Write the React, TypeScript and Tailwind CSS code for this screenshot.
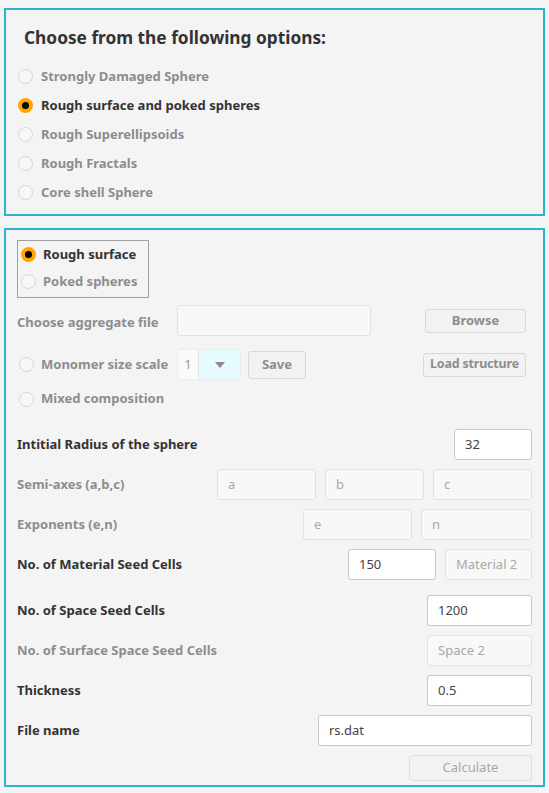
import React from 'react';

const font = { fontFamily: '"Noto Sans", "Open Sans", sans-serif' };

const Radio = ({ checked = false, dim = false }: { checked?: boolean; dim?: boolean }) => (
  <span
    className={`flex h-[15px] w-[15px] shrink-0 items-center justify-center rounded-full ${
      checked ? 'bg-[#ffa500]' : dim ? 'border border-[#d6d6d6] bg-[#f7f7f7]' : 'border border-[#ccc] bg-white'
    }`}
  >
    {checked && <span className="h-[7px] w-[7px] rounded-full bg-black" />}
  </span>
);

const Field = ({
  w,
  value,
  placeholder,
  disabled = false,
}: {
  w: string;
  value?: string;
  placeholder?: string;
  disabled?: boolean;
}) => (
  <div
    className={`flex h-[31px] items-center rounded-[3px] border px-[10px] text-[13px] ${w} ${
      disabled ? 'border-[#e2e2e2] bg-[#f8f8f8] text-[#a8a8a8]' : 'border-[#c8c8c8] bg-white text-[#444]'
    }`}
  >
    {value ?? placeholder}
  </div>
);

const Label = ({ children, dim = false }: { children: React.ReactNode; dim?: boolean }) => (
  <span className={`text-[13px] font-bold ${dim ? 'text-[#8d8d8d]' : 'text-[#333]'}`}>{children}</span>
);

const Row = ({ label, dim = false, children, className = '' }: { label: string; dim?: boolean; children: React.ReactNode; className?: string }) => (
  <div className={`flex h-[31px] items-center justify-between ${className}`}>
    <Label dim={dim}>{label}</Label>
    <div className="flex gap-[9px]">{children}</div>
  </div>
);

const options = [
  'Strongly Damaged Sphere',
  'Rough surface and poked spheres',
  'Rough Superellipsoids',
  'Rough Fractals',
  'Core shell Sphere',
];

export default function App() {
  return (
    <div className="min-h-screen w-[549px] bg-[#f4f4f4] pt-[8px] pl-[4px] pb-[8px]" style={font}>
      {/* options panel */}
      <div className="w-[541px] border-2 border-[#2bb5cd] pt-[16px] pb-[7px] pl-[12px]">
        <h2 className="ml-[6px] h-[24px] text-[17.3px] font-bold leading-[24px] text-[#333]">
          Choose from the following options:
        </h2>
        <div className="mt-[12px] flex flex-col">
          {options.map((o, i) => (
            <div key={o} className="flex h-[29px] items-center gap-[8px]">
              <Radio checked={i === 1} dim />
              <Label dim={i !== 1}>{o}</Label>
            </div>
          ))}
        </div>
      </div>

      {/* form panel */}
      <div className="mt-[12px] w-[541px] border-2 border-[#2bb5cd] px-[11px] pt-[10px] pb-[4px]">
        <div className="flex h-[58px] w-[132px] flex-col border border-[#a0a0a0] pb-[2px] pl-[3px]">
          <div className="flex h-[27px] items-center gap-[7px]">
            <Radio checked />
            <Label>Rough surface</Label>
          </div>
          <div className="flex h-[27px] items-center gap-[7px]">
            <Radio dim />
            <Label dim>Poked spheres</Label>
          </div>
        </div>

        <div className="mt-[7px] flex h-[31px] items-center">
          <span className="w-[160px]"><Label dim>Choose aggregate file</Label></span>
          <div className="h-[31px] w-[194px] rounded-[3px] border border-[#e2e2e2] bg-[#f8f8f8]" />
          <button className="ml-[54px] flex h-[24px] w-[101px] items-center justify-center rounded-[3px] border border-[#d8d8d8] bg-[#f2f2f2] text-[13px] font-bold text-[#8d8d8d]">
            Browse
          </button>
        </div>

        <div className="mt-[13px] flex h-[31px] items-center">
          <span className="ml-[2px] flex w-[158px] items-center gap-[7px]">
            <Radio dim />
            <Label dim>Monomer size scale</Label>
          </span>
          <div className="flex h-[31px] w-[64px] overflow-hidden rounded-[3px] border border-[#ececec]">
            <span className="flex w-[20px] items-center justify-center bg-[#fafafa] text-[13px] text-[#999]">1</span>
            <span className="flex flex-1 items-center justify-center border-l border-[#e6e6e6] bg-[#e6fbfd]">
              <svg width="10" height="6" viewBox="0 0 10 6">
                <path d="M0 0h10L5 6z" fill="#8a8a8a" />
              </svg>
            </span>
          </div>
          <button className="ml-[7px] flex h-[28px] w-[58px] items-center justify-center rounded-[3px] border border-[#d8d8d8] bg-[#f2f2f2] text-[13px] font-bold text-[#8d8d8d]">
            Save
          </button>
          <button className="ml-[117px] flex h-[24px] w-[103px] items-center justify-center rounded-[3px] border border-[#d8d8d8] bg-[#f2f2f2] text-[12.5px] font-bold tracking-[-0.2px] text-[#8d8d8d]">
            Load structure
          </button>
        </div>

        <div className="mt-[7px] ml-[2px] flex h-[24px] items-center gap-[7px]">
          <Radio dim />
          <Label dim>Mixed composition</Label>
        </div>

        <Row label="Intitial Radius of the sphere" className="mt-[18px]">
          <Field w="w-[78px]" value="32" />
        </Row>
        <Row label="Semi-axes (a,b,c)" dim className="mt-[9px]">
          <Field w="w-[99px]" placeholder="a" disabled />
          <Field w="w-[99px]" placeholder="b" disabled />
          <Field w="w-[99px]" placeholder="c" disabled />
        </Row>
        <Row label="Exponents (e,n)" dim className="mt-[9px]">
          <Field w="w-[109px]" placeholder="e" disabled />
          <Field w="w-[111px]" placeholder="n" disabled />
        </Row>
        <Row label="No. of Material Seed Cells" className="mt-[9px]">
          <Field w="w-[88px]" value="150" />
          <Field w="w-[87px]" placeholder="Material 2" disabled />
        </Row>
        <Row label="No. of Space Seed Cells" className="mt-[15px]">
          <Field w="w-[105px]" value="1200" />
        </Row>
        <Row label="No. of Surface Space Seed Cells" dim className="mt-[9px]">
          <Field w="w-[105px]" placeholder="Space 2" disabled />
        </Row>
        <Row label="Thickness" className="mt-[9px]">
          <Field w="w-[105px]" value="0.5" />
        </Row>
        <Row label="File name" className="mt-[9px]">
          <Field w="w-[214px]" value="rs.dat" />
        </Row>
        <div className="mt-[9px] flex justify-end">
          <button className="flex h-[26px] w-[123px] items-center justify-center rounded-[3px] border border-[#dedede] bg-[#f2f2f2] text-[13px] text-[#a8a8a8]">
            Calculate
          </button>
        </div>
      </div>
    </div>
  );
}
